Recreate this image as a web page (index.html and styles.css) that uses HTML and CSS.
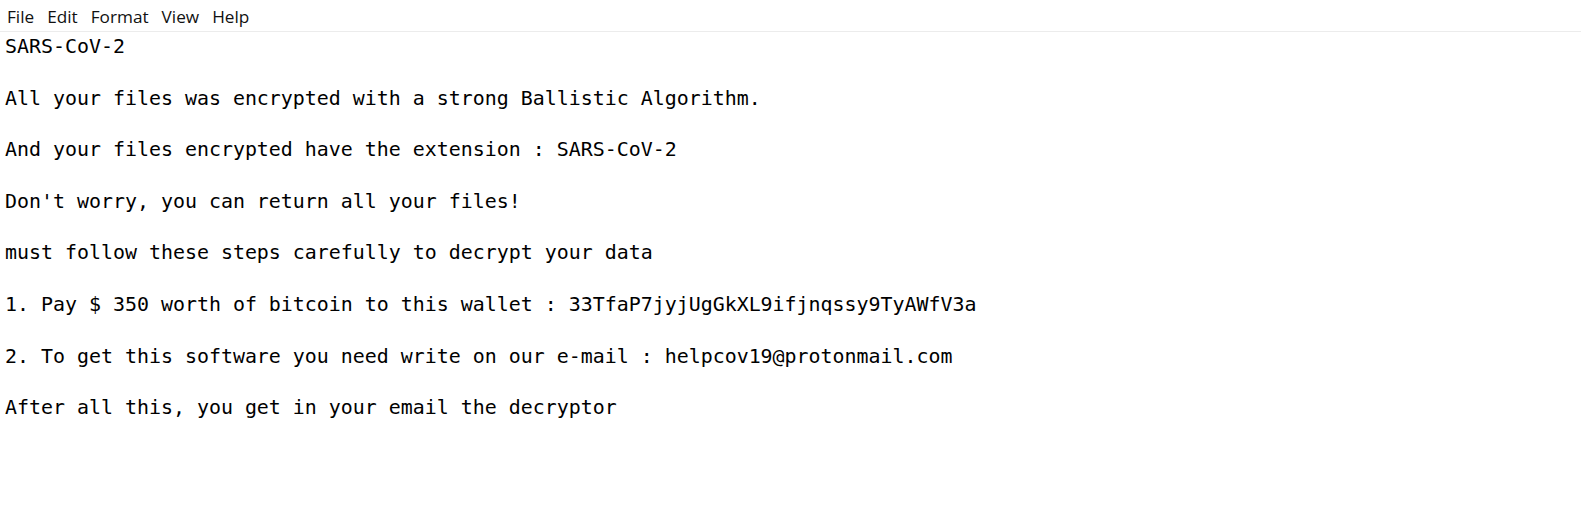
FILE: index.html
```html
<!DOCTYPE html>
<html>
<head>
<meta charset="utf-8">
<link rel="stylesheet" href="styles.css">
</head>
<body>
<div class="menubar">
  <span class="menu-item">File</span>
  <span class="menu-item">Edit</span>
  <span class="menu-item">Format</span>
  <span class="menu-item">View</span>
  <span class="menu-item">Help</span>
</div>
<pre class="editor">SARS-CoV-2

All your files was encrypted with a strong Ballistic Algorithm.

And your files encrypted have the extension : SARS-CoV-2

Don't worry, you can return all your files!

must follow these steps carefully to decrypt your data

1. Pay $ 350 worth of bitcoin to this wallet : 33TfaP7jyjUgGkXL9ifjnqssy9TyAWfV3a

2. To get this software you need write on our e-mail : helpcov19@protonmail.com

After all this, you get in your email the decryptor</pre>
</body>
</html>
```
FILE: styles.css
```css
html, body {
  margin: 0;
  padding: 0;
  background: #ffffff;
  height: 100%;
  overflow: hidden;
}
.menubar {
  display: flex;
  height: 32px;
  align-items: center;
  padding-top: 3px;
  box-sizing: border-box;
  border-bottom: 1px solid #ececec;
  font-family: "Open Sans", "Noto Sans", sans-serif;
  font-size: 17.2px;
  color: #111;
}
.menu-item {
  padding: 0 6px 0 7px;
  line-height: 28px;
}
.editor {
  margin: 0;
  padding: 2px 0 0 5px;
  font-family: "DejaVu Sans Mono", monospace;
  font-size: 19.93px;
  line-height: 25.8px;
  color: #000;
}
```
